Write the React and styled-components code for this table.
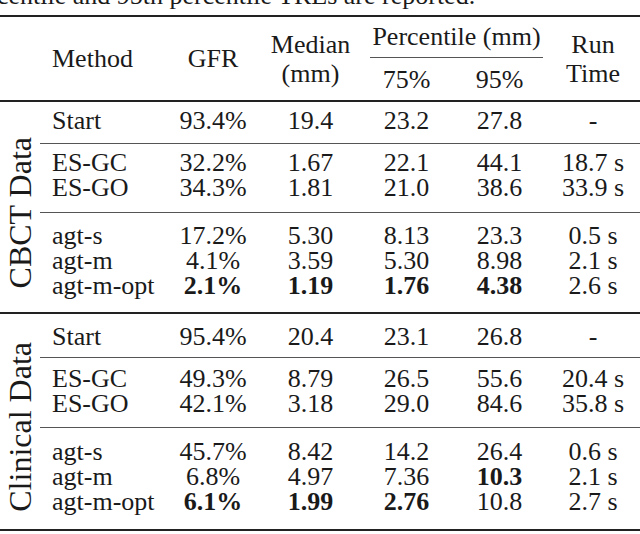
import React from 'react';
import styled, { createGlobalStyle } from 'styled-components';

const GlobalStyle = createGlobalStyle`
  html, body {
    margin: 0;
    padding: 0;
    background: #fff;
  }
  body {
    width: 640px;
    height: 534px;
    overflow: hidden;
  }
`;

const b = (v) => ({ v, bold: true });

// each block: rows plus the space above / below it (as set in the paper)
const groups = [
  {
    label: 'CBCT Data',
    blocks: [
      { pad: [6, 10], rows: [['Start', '93.4%', '19.4', '23.2', '27.8', '-']] },
      {
        pad: [6, 12],
        rows: [
          ['ES-GC', '32.2%', '1.67', '22.1', '44.1', '18.7 s'],
          ['ES-GO', '34.3%', '1.81', '21.0', '38.6', '33.9 s'],
        ],
      },
      {
        pad: [10, 14],
        rows: [
          ['agt-s', '17.2%', '5.30', '8.13', '23.3', '0.5 s'],
          ['agt-m', '4.1%', '3.59', '5.30', '8.98', '2.1 s'],
          ['agt-m-opt', b('2.1%'), b('1.19'), b('1.76'), b('4.38'), '2.6 s'],
        ],
      },
    ],
  },
  {
    label: 'Clinical Data',
    blocks: [
      { pad: [10, 8], rows: [['Start', '95.4%', '20.4', '23.1', '26.8', '-']] },
      {
        pad: [8, 11],
        rows: [
          ['ES-GC', '49.3%', '8.79', '26.5', '55.6', '20.4 s'],
          ['ES-GO', '42.1%', '3.18', '29.0', '84.6', '35.8 s'],
        ],
      },
      {
        pad: [11, 15],
        rows: [
          ['agt-s', '45.7%', '8.42', '14.2', '26.4', '0.6 s'],
          ['agt-m', '6.8%', '4.97', '7.36', b('10.3'), '2.1 s'],
          ['agt-m-opt', b('6.1%'), b('1.99'), b('2.76'), '10.8', '2.7 s'],
        ],
      },
    ],
  },
];

const widths = [40, 125, 96, 99, 93, 93, 94];

export default function App() {
  return (
    <Page>
      <GlobalStyle />
      <Caption>centile and 95th percentile TREs are reported.</Caption>
      <Table>
        <colgroup>
          {widths.map((w, i) => (
            <col key={i} style={{ width: w }} />
          ))}
        </colgroup>
        <Head>
          <tr>
            <Th rowSpan={2} />
            <Th rowSpan={2} $left>
              Method
            </Th>
            <Th rowSpan={2}>GFR</Th>
            <Th rowSpan={2}>
              Median
              <br />
              (mm)
            </Th>
            <Th colSpan={2}>
              <Spanner>Percentile (mm)</Spanner>
            </Th>
            <Th rowSpan={2}>
              Run
              <br />
              Time
            </Th>
          </tr>
          <tr>
            <Th $low>75%</Th>
            <Th $low>95%</Th>
          </tr>
        </Head>
        {groups.map((g) => {
          const total = g.blocks.reduce((n, bl) => n + bl.rows.length, 0);
          return (
            <Group key={g.label}>
              {g.blocks.map((block, bi) =>
                block.rows.map((row, ri) => (
                  <tr key={`${bi}-${ri}`}>
                    {bi === 0 && ri === 0 && (
                      <LabelCell rowSpan={total}>
                        <Vertical>{g.label}</Vertical>
                      </LabelCell>
                    )}
                    {row.map((cell, ci) => {
                      const val = typeof cell === 'string' ? cell : cell.v;
                      return (
                        <Td
                          key={ci}
                          $left={ci === 0}
                          $bold={typeof cell !== 'string'}
                          $rule={bi > 0 && ri === 0}
                          $top={ri === 0 ? block.pad[0] : 0}
                          $bottom={ri === block.rows.length - 1 ? block.pad[1] : 0}
                        >
                          {val}
                        </Td>
                      );
                    })}
                  </tr>
                ))
              )}
            </Group>
          );
        })}
      </Table>
    </Page>
  );
}

const Page = styled.div`
  width: 640px;
  height: 534px;
  overflow: hidden;
  display: flex;
  flex-direction: column;
  font-family: 'Liberation Serif', 'Times New Roman', serif;
  color: #1a1a1a;
`;

const Caption = styled.div`
  font-size: 26px;
  line-height: 26px;
  height: 26px;
  margin-top: -17px;
  margin-left: -3px;
  white-space: nowrap;
`;

const Table = styled.table`
  margin-top: 6px;
  width: 640px;
  table-layout: fixed;
  border-collapse: collapse;
  border-top: 2px solid #222;
  border-bottom: 2px solid #222;
  font-size: 26px;
`;

const Head = styled.thead`
  border-bottom: 2px solid #222;
`;

const Th = styled.th`
  font-weight: normal;
  padding: 0 0 0 ${({ $left }) => ($left ? '12px' : '0')};
  text-align: ${({ $left }) => ($left ? 'left' : 'center')};
  vertical-align: middle;
  line-height: 29px;
  height: ${({ $low }) => ($low ? '42px' : '41px')};
  white-space: nowrap;
`;

const Spanner = styled.div`
  height: 40px;
  line-height: 40px;
  margin: 0 3px 0 10px;
  border-bottom: 1px solid #555;
  white-space: nowrap;
`;

const Group = styled.tbody`
  & + & {
    border-top: 2px solid #222;
  }
`;

const LabelCell = styled.td`
  padding: 18px 0 0 0;
  vertical-align: middle;
  text-align: center;
`;

const Vertical = styled.span`
  display: inline-block;
  writing-mode: vertical-rl;
  transform: rotate(180deg);
  font-size: 32px;
  line-height: 30px;
  white-space: nowrap;
`;

const Td = styled.td`
  padding: ${({ $top }) => $top}px 0 ${({ $bottom }) => $bottom}px
    ${({ $left }) => ($left ? '12px' : '0')};
  text-align: ${({ $left }) => ($left ? 'left' : 'center')};
  font-weight: ${({ $bold }) => ($bold ? 'bold' : 'normal')};
  line-height: 25px;
  height: 25px;
  border-top: ${({ $rule }) => ($rule ? '1px solid #555' : 'none')};
  white-space: nowrap;
`;
